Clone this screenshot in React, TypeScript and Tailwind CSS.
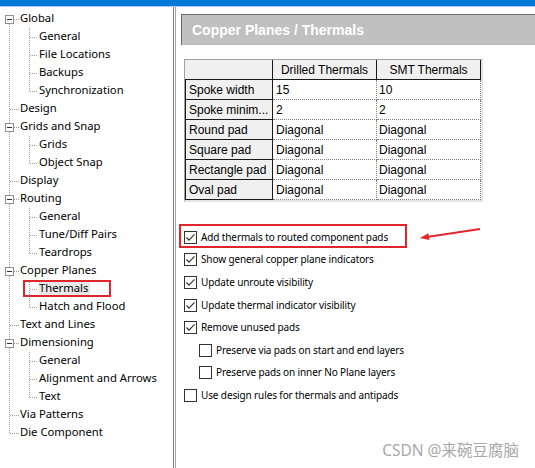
import React from 'react';

type TreeItem = {
    label: string;
    level: 0 | 1;
    box?: boolean;
    last?: boolean;
    selected?: boolean;
};

const tree: TreeItem[] = [
    { label: 'Global', level: 0, box: true },
    { label: 'General', level: 1 },
    { label: 'File Locations', level: 1 },
    { label: 'Backups', level: 1 },
    { label: 'Synchronization', level: 1, last: true },
    { label: 'Design', level: 0 },
    { label: 'Grids and Snap', level: 0, box: true },
    { label: 'Grids', level: 1 },
    { label: 'Object Snap', level: 1, last: true },
    { label: 'Display', level: 0 },
    { label: 'Routing', level: 0, box: true },
    { label: 'General', level: 1 },
    { label: 'Tune/Diff Pairs', level: 1 },
    { label: 'Teardrops', level: 1, last: true },
    { label: 'Copper Planes', level: 0, box: true },
    { label: 'Thermals', level: 1, selected: true },
    { label: 'Hatch and Flood', level: 1, last: true },
    { label: 'Text and Lines', level: 0 },
    { label: 'Dimensioning', level: 0, box: true },
    { label: 'General', level: 1 },
    { label: 'Alignment and Arrows', level: 1 },
    { label: 'Text', level: 1, last: true },
    { label: 'Via Patterns', level: 0 },
    { label: 'Die Component', level: 0, last: true },
];

const rows = [
    ['Spoke width', '15', '10'],
    ['Spoke minim...', '2', '2'],
    ['Round pad', 'Diagonal', 'Diagonal'],
    ['Square pad', 'Diagonal', 'Diagonal'],
    ['Rectangle pad', 'Diagonal', 'Diagonal'],
    ['Oval pad', 'Diagonal', 'Diagonal'],
];

const options = [
    { label: 'Add thermals to routed component pads', checked: true },
    { label: 'Show general copper plane indicators', checked: true },
    { label: 'Update unroute visibility', checked: true },
    { label: 'Update thermal indicator visibility', checked: true },
    { label: 'Remove unused pads', checked: true },
    { label: 'Preserve via pads on start and end layers', checked: false, indent: true },
    { label: 'Preserve pads on inner No Plane layers', checked: false, indent: true },
    { label: 'Use design rules for thermals and antipads', checked: false },
];

const DOT = '#a0a0a0';

function TreeLines({ item, index }: { item: TreeItem; index: number }) {
    const first = index === 0;
    const lastRoot = item.level === 0 && item.last;
    const width = item.level === 0 ? 20 : 39;
    return (
        <svg width={width} height={18} className="shrink-0" shapeRendering="crispEdges">
            <line
                x1={9.5}
                x2={9.5}
                y1={first ? 14 : 0}
                y2={lastRoot ? 9.5 : 18}
                stroke={DOT}
                strokeDasharray="1 1"
            />
            {item.level === 0 ? (
                <line x1={item.box ? 14 : 10} x2={19} y1={9.5} y2={9.5} stroke={DOT} strokeDasharray="1 1" />
            ) : (
                <>
                    <line x1={29.5} x2={29.5} y1={0} y2={item.last ? 9.5 : 18} stroke={DOT} strokeDasharray="1 1" />
                    <line x1={30} x2={38} y1={9.5} y2={9.5} stroke={DOT} strokeDasharray="1 1" />
                </>
            )}
            {item.box && (
                <>
                    <rect x={5.5} y={5.5} width={8} height={8} fill="#fff" stroke="#919191" />
                    <line x1={7} x2={12} y1={9.5} y2={9.5} stroke="#333" />
                </>
            )}
        </svg>
    );
}

function CheckBox({ checked }: { checked: boolean }) {
    return (
        <svg width={13} height={13} className="shrink-0">
            <rect x={0.5} y={0.5} width={12} height={12} fill="#fff" stroke="#333" />
            {checked && (
                <polyline points="2.5,6.5 5,9.2 10.5,3.3" fill="none" stroke="#333" strokeWidth={1.2} />
            )}
        </svg>
    );
}

function Tree() {
    return (
        <div className="w-[174px] shrink-0 border-r border-[#7a7a7a] pt-[3px] font-['Noto_Sans',sans-serif] text-[11.25px] text-black">
            {tree.map((item, i) => (
                <div key={i} className="flex h-[18px] items-center">
                    <TreeLines item={item} index={i} />
                    <span className="pb-[3px]">
                        <span
                            className={
                                'block leading-[16px] whitespace-nowrap ' +
                                (item.selected ? 'bg-[#e8e8e8] pr-[2px]' : '')
                            }
                        >
                            {item.label}
                        </span>
                    </span>
                </div>
            ))}
        </div>
    );
}

function ThermalTable() {
    return (
        <div className="ml-[3px] mt-[14px] w-[299px] border-t border-l border-[#a0a0a0] border-r-2 border-b-2 border-r-[#e3e3e3] border-b-[#e3e3e3] font-['Liberation_Sans',Arial,sans-serif] text-[12px] text-black">
            <div className="flex h-[20px]">
                <div className="w-[88px] bg-[#f0f0f0] border-r border-b border-[#1a1a1a]" />
                <div className="flex w-[104px] items-center justify-center bg-[#f0f0f0] border-r border-b border-[#1a1a1a]">
                    Drilled Thermals
                </div>
                <div className="flex w-[104px] items-center justify-center bg-[#f0f0f0] border-r border-b border-[#1a1a1a]">
                    SMT Thermals
                </div>
            </div>
            {rows.map((r, i) => (
                <div key={i} className="flex h-[20px]">
                    <div className="flex w-[88px] items-center bg-[#f0f0f0] pl-[3px] border-l border-r border-b border-[#1a1a1a] whitespace-nowrap">
                        {r[0]}
                    </div>
                    <div className="flex w-[104px] items-center pl-[3px] border-r border-b border-dotted border-[#808080]">
                        {r[1]}
                    </div>
                    <div className="flex w-[104px] items-center pl-[2px] border-r border-b border-dotted border-[#808080]">
                        {r[2]}
                    </div>
                </div>
            ))}
        </div>
    );
}

function Options() {
    return (
        <div className="ml-[3px] mt-[24px] font-['Noto_Sans',sans-serif] text-[10px] tracking-[-0.12px] text-black">
            {options.map((o, i) => (
                <div key={i} className={'flex h-[22.6px] items-center gap-[4px] ' + (o.indent ? 'pl-[15px]' : '')}>
                    <CheckBox checked={o.checked} />
                    <span className="whitespace-nowrap">{o.label}</span>
                </div>
            ))}
        </div>
    );
}

export default function App() {
    return (
        <div className="relative h-[468px] w-[535px] overflow-hidden bg-white">
            <div className="h-[6px] bg-[#0078d7]" />
            <div className="h-[1px] bg-[#a6cdee]" />
            <div className="flex h-[461px]">
                <Tree />
                <div className="w-[1px] shrink-0" />
                <div className="flex-1 border-l border-[#a0a0a0] pl-[5px] pt-[7px]">
                    <div className="flex h-[31px] items-center border-t border-l border-[#6a6a6a] bg-[#c0c0c0] pl-[10px] font-['Liberation_Sans',Arial,sans-serif] text-[14px] font-bold text-white">
                        Copper Planes / Thermals
                    </div>
                    <ThermalTable />
                    <Options />
                </div>
            </div>

            {/* annotations */}
            <div className="absolute left-[23px] top-[280px] h-[17px] w-[88px] border-2 border-[#e0262d]" />
            <div className="absolute left-[179px] top-[224px] h-[24px] w-[228px] border-2 border-[#e0262d]" />
            <svg className="absolute left-[410px] top-[220px]" width={75} height={25}>
                <line x1={70} y1={9} x2={17} y2={17} stroke="#e3262b" strokeWidth={2} />
                <polygon points="10,18 19.4,20.1 18.4,13.2" fill="#e3262b" />
            </svg>
            <div className="absolute bottom-[6px] right-[16px] font-['Noto_Sans','Noto_Sans_CJK_SC',sans-serif] text-[15.5px] text-[#a8a8a8]">
                CSDN @来碗豆腐脑
            </div>
        </div>
    );
}
